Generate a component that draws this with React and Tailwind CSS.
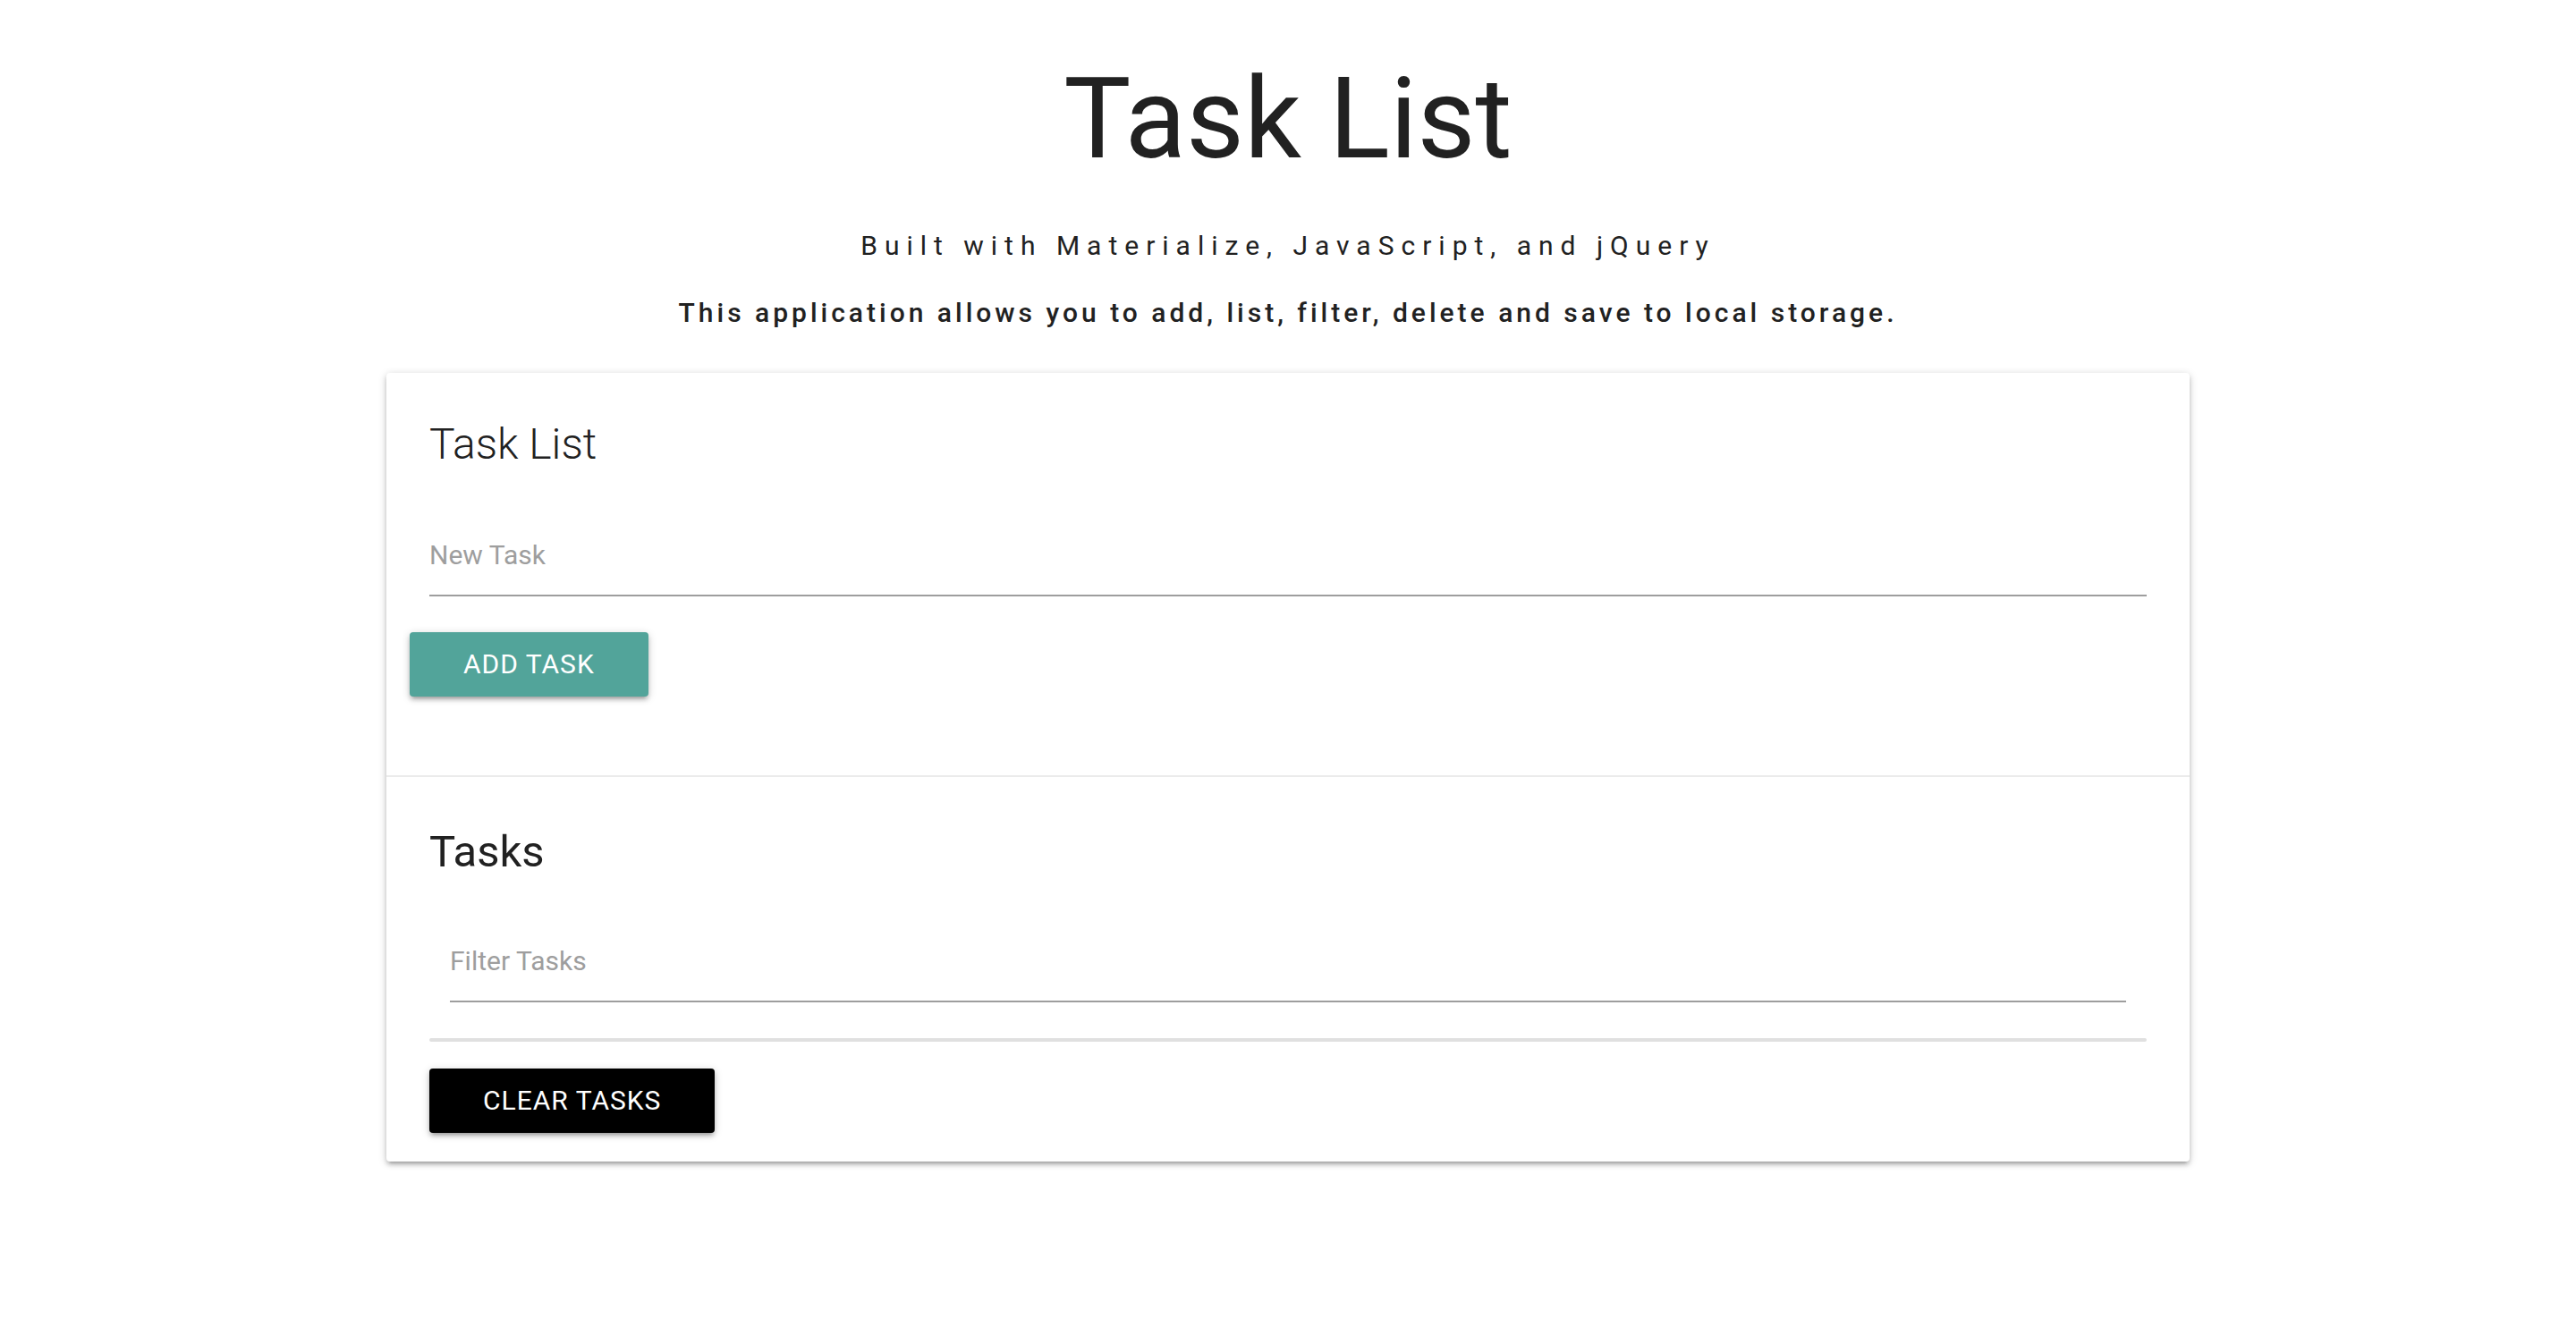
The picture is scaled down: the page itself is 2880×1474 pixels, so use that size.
import { useState } from "react";

const elevation =
  "shadow-[0_4px_4px_0_rgba(0,0,0,0.14),0_6px_2px_-4px_rgba(0,0,0,0.12),0_2px_10px_0_rgba(0,0,0,0.2)]";

const button = `h-[72px] rounded-sm text-center text-[30px] leading-[72px] tracking-[1px] text-white uppercase ${elevation}`;

function TextField({ id, label, value, onChange }) {
  return (
    <div className="relative">
      <input
        id={id}
        type="text"
        placeholder=" "
        value={value}
        onChange={(e) => onChange(e.target.value)}
        className="peer block h-[90px] w-full border-b-2 border-[#9e9e9e] bg-transparent outline-none focus:border-[#26a69a]"
      />
      <label
        htmlFor={id}
        className="absolute top-0 left-0 cursor-text leading-[88px] text-[#9e9e9e] peer-focus:-top-10 peer-focus:text-2xl peer-focus:leading-[88px] peer-focus:text-[#26a69a] peer-[:not(:placeholder-shown)]:-top-10 peer-[:not(:placeholder-shown)]:text-2xl peer-[:not(:placeholder-shown)]:leading-[88px]"
      >
        {label}
      </label>
    </div>
  );
}

export default function App() {
  const [tasks, setTasks] = useState([]);
  const [draft, setDraft] = useState("");
  const [filter, setFilter] = useState("");

  const addTask = (e) => {
    e.preventDefault();
    if (!draft.trim()) return;
    setTasks([...tasks, draft.trim()]);
    setDraft("");
  };

  const shown = tasks.filter((t) => t.toLowerCase().includes(filter.toLowerCase()));

  return (
    <div className="bg-white pb-20 font-['Roboto',sans-serif] text-[30px] text-[#212121]">
      <header className="pt-16 text-center">
        <h1 className="text-[126px] leading-[138px]">Task List</h1>
        <p className="mt-[50px] leading-[45px] tracking-[8px]">
          Built with Materialize, JavaScript, and jQuery
        </p>
        <p className="mt-[30px] leading-[45px] font-medium tracking-[4px]">
          This application allows you to add, list, filter, delete and save to local storage.
        </p>
      </header>

      <main className={`mx-auto mt-[45px] w-[70%] rounded-sm bg-white ${elevation}`}>
        <section className="px-12 pt-12 pb-[88px]">
          <h2 className="text-[48px] leading-[64px] font-light">Task List</h2>
          <form onSubmit={addTask} className="mt-12">
            <TextField id="task" label="New Task" value={draft} onChange={setDraft} />
            <button type="submit" className={`mt-10 -ml-[22px] bg-[#52a49a] px-[60px] ${button}`}>
              Add Task
            </button>
          </form>
        </section>

        <section className="border-t-2 border-[#ebebeb] px-12 pt-12 pb-8">
          <h2 className="text-[49px] leading-[72px]">Tasks</h2>
          <div className="mt-[42px] px-[23px]">
            <TextField id="filter" label="Filter Tasks" value={filter} onChange={setFilter} />
          </div>
          <ul className="mt-10 mb-[30px] rounded-sm border-2 border-[#e0e0e0]">
            {shown.map((t) => (
              <li key={t} className="px-10 py-5">
                {t}
              </li>
            ))}
          </ul>
          <button type="button" onClick={() => setTasks([])} className={`block bg-black px-[60px] ${button}`}>
            Clear Tasks
          </button>
        </section>
      </main>
    </div>
  );
}
